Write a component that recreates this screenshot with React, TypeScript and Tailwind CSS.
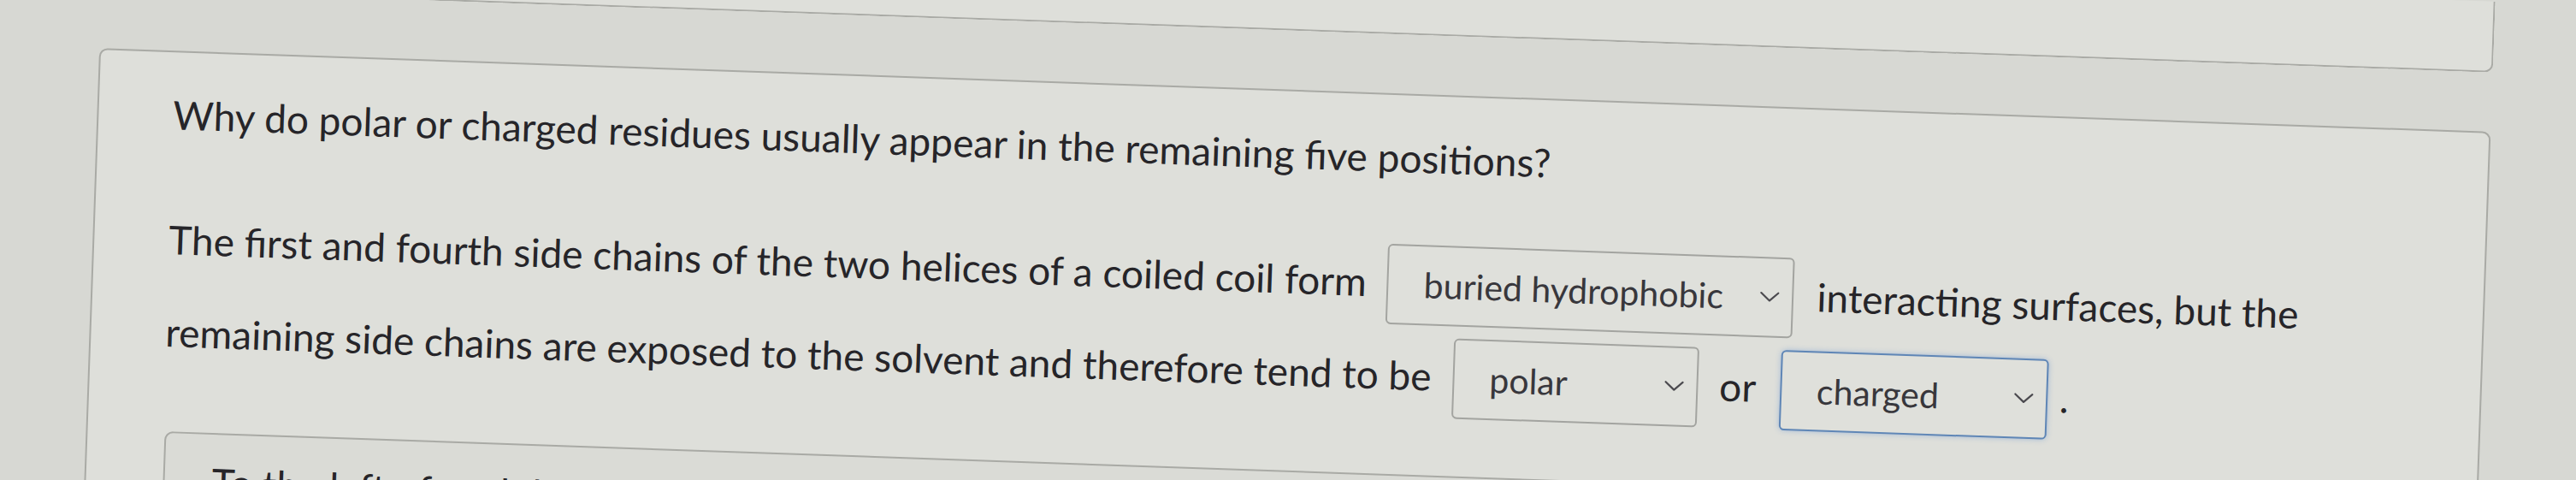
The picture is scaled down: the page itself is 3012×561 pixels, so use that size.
import React from "react";

interface DropdownProps {
	value: string;
	width: string;
	focused?: boolean;
}

function Chevron() {
	return (
		<svg width="24" height="13" viewBox="0 0 24 13" fill="none" aria-hidden="true">
			<polyline points="2,2 12,11 22,2" stroke="#4b4a4f" strokeWidth="2.2" strokeLinecap="round" strokeLinejoin="round" />
		</svg>
	);
}

function Dropdown({ value, width, focused }: DropdownProps) {
	const base =
		"inline-flex h-[94px] items-center justify-between rounded-[6px] border-2 bg-[#dfe0db] pl-[41px] pr-[14px] align-baseline text-[41px] leading-[1.2] text-[#38373c]";
	const ring = focused
		? "border-[#5f86b6] shadow-[0_0_6px_rgba(90,140,210,0.45)]"
		: "border-[#a3a4a0]";
	return (
		<button type="button" className={`${base} ${ring} ${width}`}>
			<span>{value}</span>
			<Chevron />
		</button>
	);
}

export default function App() {
	return (
		<div className="h-[561px] w-[3012px] overflow-hidden bg-[#d7d8d3] font-['Lato',sans-serif] text-[#262529]">
			<div className="flex w-[3100px] origin-top-left rotate-[2deg] flex-col">
				{/* previous question card, only its bottom edge is in view */}
				<div className="-ml-[40px] -mt-[100px] h-[83px] w-[2956px] rounded-br-[10px] border-b-2 border-r-2 border-[#a9aaa5] bg-[#dedfda]" />

				{/* current question */}
				<div className="ml-[118px] mt-[69px] min-h-[700px] w-[2798px] rounded-[10px] border-2 border-[#a9aaa5] bg-[#dedfda] pl-[87px] pr-[160px] pt-[45px]">
					<p className="text-[46px] leading-[1.2]">
						Why do polar or charged residues usually appear in the remaining five positions?
					</p>

					<p className="mt-[65px] text-[46px] leading-[108px]">
						The first and fourth side chains of the two helices of a coiled coil form
						<span className="ml-[24px] mr-[27px]"><Dropdown value="buried hydrophobic" width="w-[476px]" /></span>
						interacting surfaces, but the remaining side chains are exposed to the solvent and therefore tend to be
						<span className="ml-[25px] mr-[25px]"><Dropdown value="polar" width="w-[287px]" /></span>
						or
						<span className="ml-[28px] mr-[14px]"><Dropdown value="charged" width="w-[313px]" focused /></span>
						.
					</p>

					{/* next part, cut off by the bottom of the screen */}
					<div className="ml-[3px] mt-[62px] min-h-[200px] rounded-[10px] border-2 border-[#a9aaa5] bg-[#dadbd6] pl-[30px] pt-[28px]">
						<p className="text-[46px] leading-[1.2]">
							<span className="mr-[8px] text-[30px]">o</span>To the left of each helix, the side chains
						</p>
					</div>
				</div>
			</div>
		</div>
	);
}
